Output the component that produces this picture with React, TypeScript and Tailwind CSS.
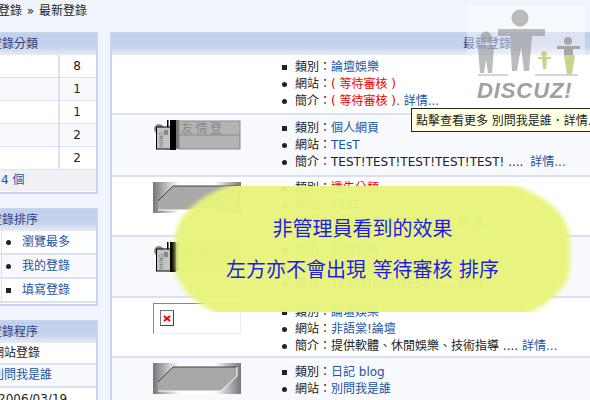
import React from "react";

const F = { fontFamily: '"DejaVu Sans","Noto Sans CJK TC",sans-serif' };

function Banner1() {
  return (
    <svg width="88" height="32" viewBox="0 0 88 32" className="block">
      <circle cx="6" cy="9" r="5" fill="#8a8a8a" />
      <rect x="14" y="0" width="1.5" height="8" fill="#000" />
      <rect x="3.5" y="7" width="14" height="22" fill="#c4c4c4" stroke="#000" />
      <rect x="11" y="10" width="4" height="5" fill="#888" />
      <text x="5" y="26" fontSize="5" fill="#666" transform="rotate(-90 8 24)">HUNG</text>
      <rect x="17" y="0" width="6" height="30" fill="#000" />
      <rect x="23" y="0" width="3" height="29" fill="#777" />
      <rect x="26" y="1" width="61" height="28" fill="#b4b4b4" stroke="#888" />
      <line x1="26" y1="15" x2="87" y2="15" stroke="#888" />
      <text x="28" y="13" fontSize="12" letterSpacing="2.5" fill="#8a8a8a" fontFamily="Noto Sans CJK TC">友情登</text>
    </svg>
  );
}

function Banner2() {
  return (
    <svg width="88" height="31" viewBox="0 0 88 31" className="block">
      <defs>
        <linearGradient id="g" x1="0" x2="1" y1="0" y2="0">
          <stop offset="0" stopColor="#777" />
          <stop offset="0.3" stopColor="#fff" />
          <stop offset="0.7" stopColor="#fff" />
          <stop offset="1" stopColor="#777" />
        </linearGradient>
      </defs>
      <rect width="88" height="31" fill="url(#g)" />
      <polygon points="20,4 84,4 84,13 68,28 5,28 5,19" fill="#a8a8a8" />
      <polyline points="5,19 20,4 84,4" fill="none" stroke="#444" />
      <polyline points="84,4 84,13 68,28 5,28" fill="none" stroke="#fff" />
    </svg>
  );
}

function Broken() {
  return (
    <div className="w-[88px] h-[31px] bg-white border-t border-l border-t-[#888] border-l-[#888] border-r border-b border-r-[#eee] border-b-[#eee] pl-[6px] pt-[6px]">
      <div className="w-[14px] h-[16px] border border-[#777] border-r-[#444] border-b-[#444] flex items-center justify-center bg-[#f8f8f8]">
        <svg width="8" height="7" viewBox="0 0 8 7">
          <path d="M1 1 L7 6 M7 1 L1 6" stroke="#f00" strokeWidth="2" />
        </svg>
      </div>
    </div>
  );
}

const L = ({ children, cls }: { children: React.ReactNode; cls?: string }) => <span className={`text-[#1c55a5] ${cls ?? ""}`}>{children}</span>;
const R = ({ children }: { children: React.ReactNode }) => <span className="text-[#f00000]">{children}</span>;

function Row({ h, pt, alt, img, lines }: { h: string; pt: string; alt?: boolean; img?: React.ReactNode; lines: React.ReactNode[] }) {
  return (
    <div className={`flex border-b-2 border-[#d8e1f2] ${h} ${alt ? "bg-[#f7f9fc]" : "bg-white"}`}>
      <div className="w-[170px] shrink-0 pt-[5px] flex justify-center">{img}</div>
      <ul className={`${pt} pl-[1px] text-[12px] leading-[17px] text-[#222]`}>
        {lines.map((l, i) => (
          <li key={i} className="flex items-center h-[17px] whitespace-pre">
            <span className={`w-[5px] h-[5px] mr-[8px] -ml-[1px] bg-[#222] ${i === 0 ? "" : "rounded-full"}`} />
            {l}
          </li>
        ))}
      </ul>
    </div>
  );
}

function Head({ children, cls }: { children: React.ReactNode; cls?: string }) {
  return (
    <div className={`h-[21px] bg-gradient-to-b from-[#c1cfeb] via-[#c6d3ec] via-60% to-[#e6ebf7] text-[12px] leading-[20px] text-[#2b4080] ${cls ?? ""}`}>
      {children}
    </div>
  );
}

function Side({ children, cls }: { children: React.ReactNode; cls: string }) {
  return <div className={`w-[198px] -ml-[100px] border-2 border-[#c6d4ef] bg-white text-[12px] ${cls}`}>{children}</div>;
}

export default function App() {
  const counts = ["8", "1", "1", "2", "2"];
  return (
    <div className="relative w-[590px] h-[400px] overflow-hidden bg-[#f0f5fd] text-[#222]" style={F}>
      <div className="h-[32px] pt-[3px] -ml-[2px] text-[12px] leading-[17px] whitespace-nowrap">登錄 <span className="mx-[1px]">»</span> 最新登錄</div>
      <div className="flex gap-[13px]">
        <div className="w-[97px] shrink-0 flex flex-col gap-[14px]">
          <Side cls="h-[162px]">
            <Head cls="pl-[88px]">登錄分類</Head>
            {counts.map((c, i) => (
              <div key={i} className={`flex h-[23px] border-b border-[#dbe3f3] ${i % 2 ? "bg-[#f7f9fc]" : "bg-white"}`}>
                <div className="w-[158px] border-r-2 border-[#dbe3f3]" />
                <div className="flex-1 text-center leading-[22px] -ml-[2px]">{c}</div>
              </div>
            ))}
            <div className="h-[21px] bg-[repeating-conic-gradient(#e6ecf7_0_25%,#f5f7fc_0_50%)] bg-[length:2px_2px] pl-[99px] leading-[20px] text-[#1c55a5]">4 個</div>
          </Side>
          <Side cls="h-[98px]">
            <Head cls="pl-[88px]">登錄排序</Head>
            {["瀏覽最多", "我的登錄", "填寫登錄"].map((t, i) => (
              <div key={t} className={`flex h-[24px] border-b-2 border-[#dbe3f3] ${i === 1 ? "bg-[#f7f9fc]" : "bg-white"}`}>
                <div className="w-[100px] border-r border-[#dbe3f3]" />
                <div className="flex items-center pl-[4px] leading-[20px]">
                  <span className={`w-[5px] h-[5px] bg-[#222] mr-[11px] ${i === 2 ? "" : "rounded-full"}`} />
                  <L>{t}</L>
                </div>
              </div>
            ))}
          </Side>
          <Side cls="h-[90px]">
            <Head cls="pl-[88px]">登錄程序</Head>
            <div className="h-[22px] border-b-2 border-[#dbe3f3] pl-[90px] leading-[21px]">網站登錄</div>
            <div className="h-[23px] border-b-2 border-[#dbe3f3] pl-[90px] leading-[21px] bg-[#f7f9fc]"><L>別問我是誰</L></div>
            <div className="h-[22px] pl-[96px] leading-[22px]">2006/03/19</div>
          </Side>
        </div>

        <div className="w-[752px] shrink-0 border-l-2 border-t-2 border-[#c6d4ef] h-[370px]">
          <Head cls="text-center">最新登錄</Head>
          <Row h="h-[60px]" pt="pt-[4px]" lines={[<>類別：<L>論壇娛樂</L></>, <>網站：<R>( 等待審核 )</R></>, <>簡介：<R>( 等待審核 )</R><L>. 詳情...</L></>]} />
          <Row h="h-[62px]" pt="pt-[5px]" alt img={<Banner1 />} lines={[<>類別：<L>個人網頁</L></>, <>網站：<L>TEsT</L></>, <>簡介：TEST!TEST!TEST!TEST!TEST! .... <L cls="ml-[3px]">詳情...</L></>]} />
          <Row h="h-[60px]" pt="pt-[3px]" img={<Banner2 />} lines={[<>類別：<R>遺失分類</R></>, <>網站：<L>TEsT</L></>, <>簡介：TEST!TEST!TEST! .... <L>詳情...</L></>]} />
          <Row h="h-[61px]" pt="pt-[5px]" alt img={<Banner1 />} lines={[<>類別：<L>論壇娛樂</L></>, <>網站：<L>別問我是誰</L></>, <>簡介：TEST!TEST!TEST! .... <L>詳情...</L></>]} />
          <Row h="h-[60px]" pt="pt-[6px]" img={<Broken />} lines={[<>類別：<L>論壇娛樂</L></>, <>網站：<L>非語棠!論壇</L></>, <>簡介：提供軟體、休閒娛樂、技術指導 .... <L>詳情...</L></>]} />
          <Row h="h-[60px]" pt="pt-[6px]" alt img={<Banner2 />} lines={[<>類別：<L>日記 blog</L></>, <>網站：<L>別問我是誰</L></>]} />
        </div>
      </div>

      <div className="absolute left-[467px] top-[5px] w-[118px] h-[50px] bg-white/40" />
      <svg className="absolute left-[470px] top-[5px]" width="115" height="100" viewBox="0 0 115 100">
        <g fill="#8f8f8f" fillOpacity="0.6">
          <circle cx="50" cy="13" r="8.5" />
          <path d="M28 24 H75 V31 H62 L59 66 H54 L51 42 L47 66 H42 L40 31 H28 Z" />
          <circle cx="16" cy="32" r="5.5" />
          <path d="M8 40 H24 L23 56 L22 68 H18 L16 55 L14 68 H10 L9 56 Z" />
        </g>
        <g fill="#c8d48a">
          <circle cx="74" cy="49" r="3" />
          <path d="M68 52 H81 V54 H77 L76 64 H73 L72 54 H68 Z" />
          <path d="M94 50 H105 L102 69 H97 Z" />
        </g>
        <g fill="#9a9a9a" fillOpacity="0.85">
          <circle cx="98" cy="36" r="4" />
          <path d="M87 41 H110 V44 H103 L103 50 H94 L94 44 H87 Z" />
        </g>
        <path d="M8 70 H38 M65 70 H108" stroke="#aaa" />
        <text x="7" y="93" fontSize="22" fontWeight="700" fontStyle="italic" letterSpacing="0.9" fill="#a0a0a0" fontFamily="Liberation Sans">DISCUZ!</text>
      </svg>

      <div className="absolute left-[411px] top-[108px] w-[200px] h-[24px] border border-[#222] bg-[#ffffe1] text-[12px] leading-[23px] pt-[1px] pl-[4px] whitespace-nowrap">點擊查看更多 別問我是誰．詳情...</div>

      <div className="absolute left-[170px] top-[186px] w-[405px] h-[126px] overflow-hidden">
        <div className="absolute left-[5px] top-[-20px] w-[395px] h-[172px] rounded-[42%] bg-[#e8f47c]/97 blur-[2px]" />
        <div className="relative text-center text-[20px] leading-[28px] text-[#1c1ce6] whitespace-nowrap pr-[20px]" style={{ fontFamily: '"Noto Sans CJK TC",sans-serif', wordSpacing: "2px" }}>
          <div className="pt-[28px]">非管理員看到的效果</div>
          <div className="pt-[13px]">左方亦不會出現 等待審核 排序</div>
        </div>
      </div>
    </div>
  );
}
